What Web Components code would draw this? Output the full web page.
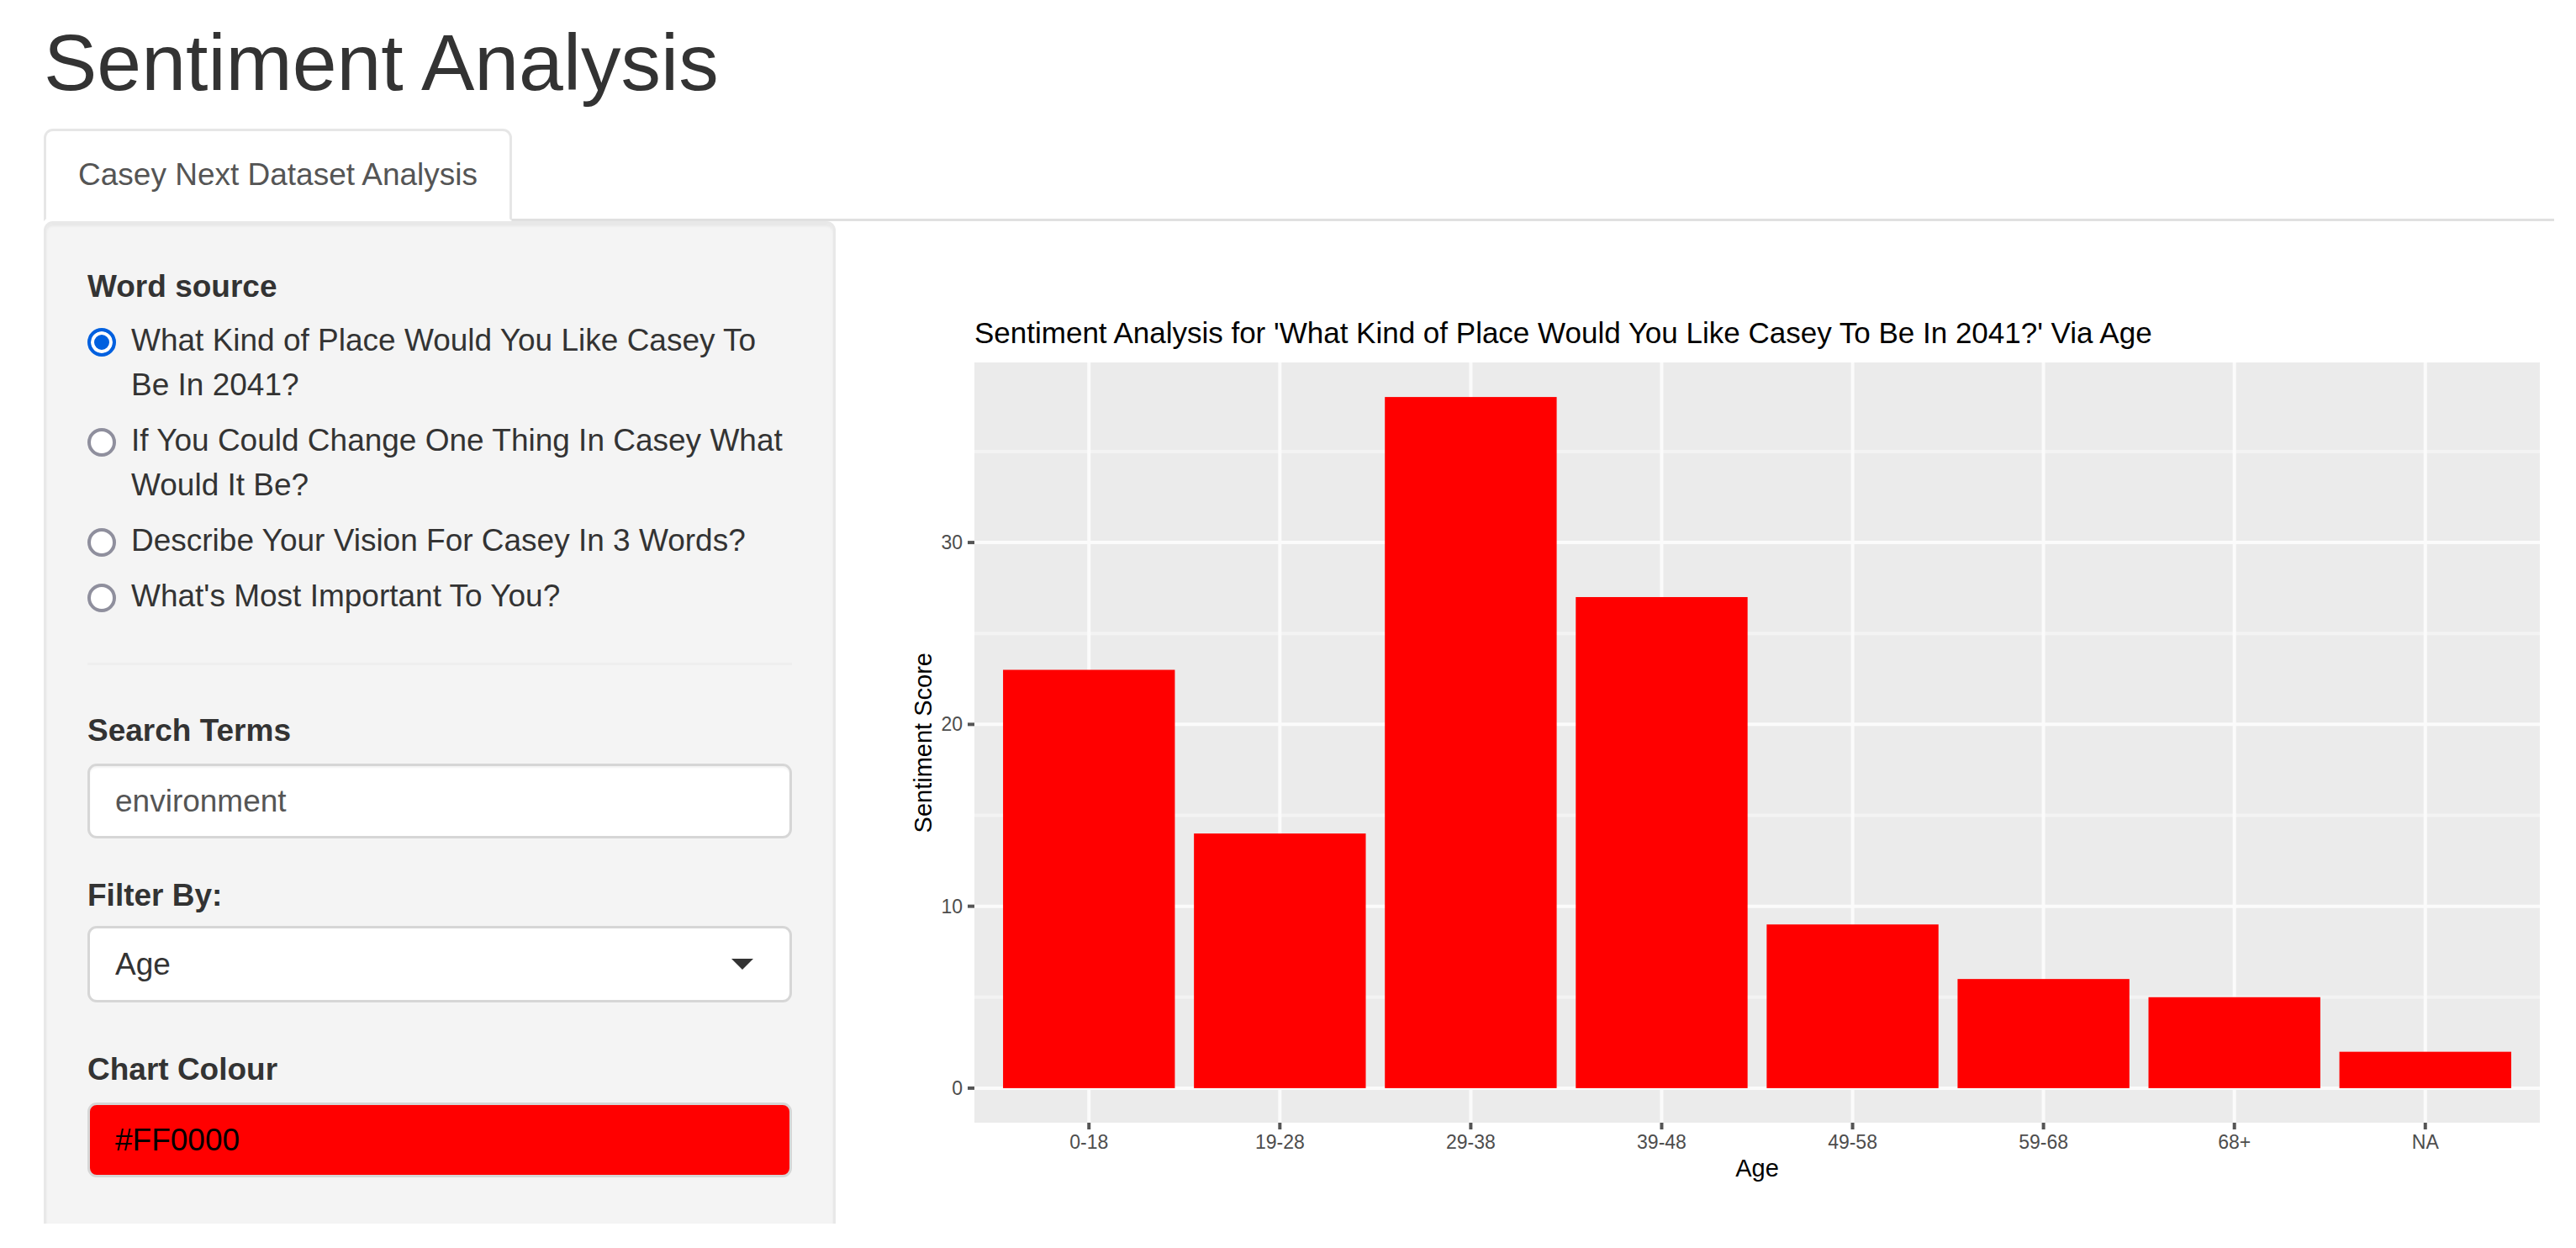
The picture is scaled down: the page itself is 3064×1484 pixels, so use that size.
<!DOCTYPE html>
<html lang="en">
<head>
<meta charset="utf-8">
<title>Sentiment Analysis</title>
<style>
    body {
        margin: 0;
        background: #fff;
        color: #333;
        font: 37px/53px "Liberation Sans", Arial, sans-serif;
    }
</style>
</head>
<body>
<sentiment-app heading="Sentiment Analysis">
    <tab-bar slot="tabs" label="Casey Next Dataset Analysis"></tab-bar>
    <side-panel slot="sidebar">
        <radio-group label="Word source" name="source">
            <option selected>What Kind of Place Would You Like Casey To Be In 2041?</option>
            <option>If You Could Change One Thing In Casey What Would It Be?</option>
            <option>Describe Your Vision For Casey In 3 Words?</option>
            <option>What's Most Important To You?</option>
        </radio-group>
        <panel-rule></panel-rule>
        <text-field label="Search Terms" value="environment"></text-field>
        <select-field label="Filter By:" options="Age"></select-field>
        <colour-field label="Chart Colour" value="#FF0000"></colour-field>
    </side-panel>
    <bar-chart slot="main"
        heading="Sentiment Analysis for 'What Kind of Place Would You Like Casey To Be In 2041?' Via Age"
        x-title="Age" y-title="Sentiment Score" fill="#FF0000"
        labels="0-18,19-28,29-38,39-48,49-58,59-68,68+,NA"
        values="23,14,38,27,9,6,5,2"></bar-chart>
</sentiment-app>

<script>
// Styles shared by the form fields
const fieldStyles = `
    :host {
        display: block;
    }

    label {
        display: block;
        margin-bottom: 13px;
        font-weight: bold;
    }

    input, select {
        display: block;
        box-sizing: border-box;
        width: 100%;
        height: 89px;
        margin: 0;
        padding: 0 30px;
        border: 3px solid #d6d6d6;
        border-radius: 11px;
        background: #fff;
        color: #555;
        font: inherit;
        outline: none;
    }
`;

class SentimentApp extends HTMLElement {
    constructor() {
        super();
        this.attachShadow({ mode: 'open' });
    }

    connectedCallback() {
        this.shadowRoot.innerHTML = `
            <style>
                :host {
                    display: block;
                    padding: 22px 26px 26px 52px;
                }

                h1 {
                    margin: 0 0 27px;
                    font-size: 95px;
                    font-weight: normal;
                    line-height: 104px;
                }

                .row {
                    display: grid;
                    grid-template-columns: 942fr 1965fr;
                    column-gap: 79px;
                }
            </style>
            <h1>${this.getAttribute('heading')}</h1>
            <slot name="tabs"></slot>
            <div class="row">
                <slot name="sidebar"></slot>
                <slot name="main"></slot>
            </div>
        `;
    }
}

class TabBar extends HTMLElement {
    constructor() {
        super();
        this.attachShadow({ mode: 'open' });
    }

    connectedCallback() {
        this.shadowRoot.innerHTML = `
            <style>
                :host {
                    display: block;
                }

                nav {
                    display: flex;
                    border-bottom: 3px solid #e0e0e0;
                }

                /* The open tab covers the line under the bar */
                a {
                    margin-bottom: -3px;
                    padding: 25px 38px 26px;
                    border: 3px solid #e6e6e6;
                    border-bottom-color: #fff;
                    border-radius: 11px 11px 0 0;
                    background: #fff;
                    color: #555;
                    text-decoration: none;
                }
            </style>
            <nav><a href="#dataset">${this.getAttribute('label')}</a></nav>
        `;
    }
}

class SidePanel extends HTMLElement {
    constructor() {
        super();
        this.attachShadow({ mode: 'open' });
        this.shadowRoot.innerHTML = `
            <style>
                :host {
                    display: flex;
                    flex-direction: column;
                    padding: 48px 49px 55px;
                    border: 3px solid #e8e8e8;
                    border-bottom: 0;
                    border-radius: 11px 11px 0 0;
                    background: #f4f4f4;
                    box-shadow: inset 0 3px 3px rgba(0, 0, 0, 0.05);
                }

                ::slotted(text-field) {
                    margin-bottom: 41px;
                }

                ::slotted(select-field) {
                    margin-bottom: 53px;
                }
            </style>
            <slot></slot>
        `;
    }
}

class PanelRule extends HTMLElement {
    constructor() {
        super();
        this.attachShadow({ mode: 'open' });
        this.shadowRoot.innerHTML = `
            <style>
                :host {
                    display: block;
                    padding: 53px 0 51px;
                }

                hr {
                    margin: 0;
                    border: 0;
                    border-top: 3px solid #eee;
                }
            </style>
            <hr>
        `;
    }
}

class RadioGroup extends HTMLElement {
    constructor() {
        super();
        this.attachShadow({ mode: 'open' });
    }

    connectedCallback() {
        const name = this.getAttribute('name');
        const options = [...this.querySelectorAll('option')];

        this.shadowRoot.innerHTML = `
            <style>
                :host {
                    display: block;
                }

                fieldset {
                    display: flex;
                    flex-direction: column;
                    gap: 13px;
                    margin: 0;
                    padding: 0;
                    border: 0;
                    min-width: 0;
                }

                legend {
                    padding: 0 0 11px;
                    font-weight: bold;
                }

                label {
                    display: flex;
                    gap: 18px;
                }

                input {
                    appearance: none;
                    flex: none;
                    box-sizing: border-box;
                    width: 34px;
                    height: 34px;
                    margin: 12px 0 0;
                    border: 4px solid #8f8f9d;
                    border-radius: 50%;
                    background: #fff;
                }

                input:checked {
                    border-color: #0060df;
                    background: #0060df;
                    box-shadow: inset 0 0 0 4px #fff;
                }
            </style>
            <fieldset>
                <legend>${this.getAttribute('label')}</legend>
                ${options.map((option, i) => `
                    <label for="${name}-${i}">
                        <input type="radio" id="${name}-${i}" name="${name}" ${option.hasAttribute('selected') ? 'checked' : ''}>
                        <span>${option.textContent}</span>
                    </label>
                `).join('')}
            </fieldset>
        `;
    }
}

class TextField extends HTMLElement {
    constructor() {
        super();
        this.attachShadow({ mode: 'open' });
    }

    connectedCallback() {
        this.shadowRoot.innerHTML = `
            <style>
                ${fieldStyles}
                input {
                    box-shadow: inset 0 2px 2px rgba(0, 0, 0, 0.05);
                }
            </style>
            <label for="field">${this.getAttribute('label')}</label>
            <input type="text" id="field" value="${this.getAttribute('value')}">
        `;
    }
}

class SelectField extends HTMLElement {
    constructor() {
        super();
        this.attachShadow({ mode: 'open' });
    }

    connectedCallback() {
        const options = this.getAttribute('options').split(',');

        this.shadowRoot.innerHTML = `
            <style>
                ${fieldStyles}
                label {
                    margin-bottom: 10px;
                }

                .control {
                    display: grid;
                    align-items: center;
                }

                .control > * {
                    grid-area: 1 / 1;
                }

                select {
                    appearance: none;
                    height: 91px;
                    color: #333;
                }

                svg {
                    justify-self: end;
                    margin-right: 46px;
                    fill: #333;
                    pointer-events: none;
                }
            </style>
            <label for="field">${this.getAttribute('label')}</label>
            <div class="control">
                <select id="field">
                    ${options.map(option => `<option>${option}</option>`).join('')}
                </select>
                <svg width="26" height="13" viewBox="0 0 26 13"><path d="M0 0h26L13 13z"/></svg>
            </div>
        `;
    }
}

class ColourField extends HTMLElement {
    constructor() {
        super();
        this.attachShadow({ mode: 'open' });
    }

    connectedCallback() {
        const value = this.getAttribute('value');

        this.shadowRoot.innerHTML = `
            <style>
                ${fieldStyles}
                input {
                    background: ${value};
                    color: #000;
                }
            </style>
            <label for="field">${this.getAttribute('label')}</label>
            <input type="text" id="field" value="${value}">
        `;
    }
}

class BarChart extends HTMLElement {
    constructor() {
        super();
        this.attachShadow({ mode: 'open' });
    }

    connectedCallback() {
        const labels = this.getAttribute('labels').split(',');
        const values = this.getAttribute('values').split(',').map(Number);
        const fill = this.getAttribute('fill');

        // 5% of free room above and below the bars, 0.6 of a band at each side
        const max = Math.max(...values);
        const low = -max * 0.05;
        const high = max * 1.05;
        const x = band => `${(band + 0.6) / (labels.length + 0.2) * 100}%`;
        const y = value => `${(high - value) / (high - low) * 100}%`;

        let minor = '';
        let major = '';
        let axis = '';
        for (let value = 0; value < high; value += 5) {
            if (value % 10) {
                minor += `<line x1="0" x2="100%" y1="${y(value)}" y2="${y(value)}"/>`;
                continue;
            }
            major += `<line x1="0" x2="100%" y1="${y(value)}" y2="${y(value)}"/>`;
            axis += `
                <line x1="-8" x2="0" y1="${y(value)}" y2="${y(value)}"/>
                <text x="-14" y="${y(value)}" dy="8" text-anchor="end">${value}</text>
            `;
        }

        labels.forEach((label, i) => {
            major += `<line x1="${x(i)}" x2="${x(i)}" y1="0" y2="100%"/>`;
            // Ticks and labels hang below the panel from a nested origin
            axis += `
                <svg x="${x(i)}" y="100%">
                    <line y2="8"/>
                    <text y="31" text-anchor="middle">${label}</text>
                </svg>
            `;
        });

        const bars = values.map((value, i) => `
            <rect x="${x(i - 0.45)}" y="${y(value)}"
                width="${0.9 / (labels.length + 0.2) * 100}%"
                height="${value / (high - low) * 100}%"/>
        `).join('');

        this.shadowRoot.innerHTML = `
            <style>
                :host {
                    display: grid;
                    grid-template-columns: 33px 1fr;
                    grid-template-rows: auto 1fr auto;
                    column-gap: 44px;
                    padding: 113px 17px 49px 9px;
                    color: #000;
                    font-size: 29px;
                    line-height: 33px;
                }

                h2 {
                    grid-column: 2;
                    margin: 0 0 15px;
                    font-size: 35px;
                    font-weight: normal;
                    line-height: 40px;
                    white-space: nowrap;
                }

                .y-title {
                    align-self: center;
                    writing-mode: vertical-rl;
                    transform: rotate(180deg);
                    white-space: nowrap;
                }

                .x-title {
                    grid-column: 2;
                    margin-top: 38px;
                    text-align: center;
                }

                svg {
                    overflow: visible;
                }

                .panel {
                    width: 100%;
                    height: 100%;
                    min-height: 400px;
                    background: #ebebeb;
                }

                .minor {
                    stroke: #f3f3f3;
                    stroke-width: 4px;
                }

                .major {
                    stroke: #fbfbfb;
                    stroke-width: 4px;
                }

                .bars {
                    fill: ${fill};
                }

                .axis {
                    fill: #4d4d4d;
                    font-size: 23px;
                }

                .axis line {
                    stroke: #555;
                    stroke-width: 4px;
                }
            </style>
            <h2>${this.getAttribute('heading')}</h2>
            <div class="y-title">${this.getAttribute('y-title')}</div>
            <svg class="panel">
                <g class="minor">${minor}</g>
                <g class="major">${major}</g>
                <g class="bars">${bars}</g>
                <g class="axis">${axis}</g>
            </svg>
            <div class="x-title">${this.getAttribute('x-title')}</div>
        `;
    }
}

// Define the custom elements
customElements.define('sentiment-app', SentimentApp);
customElements.define('tab-bar', TabBar);
customElements.define('side-panel', SidePanel);
customElements.define('panel-rule', PanelRule);
customElements.define('radio-group', RadioGroup);
customElements.define('text-field', TextField);
customElements.define('select-field', SelectField);
customElements.define('colour-field', ColourField);
customElements.define('bar-chart', BarChart);
</script>
</body>
</html>
